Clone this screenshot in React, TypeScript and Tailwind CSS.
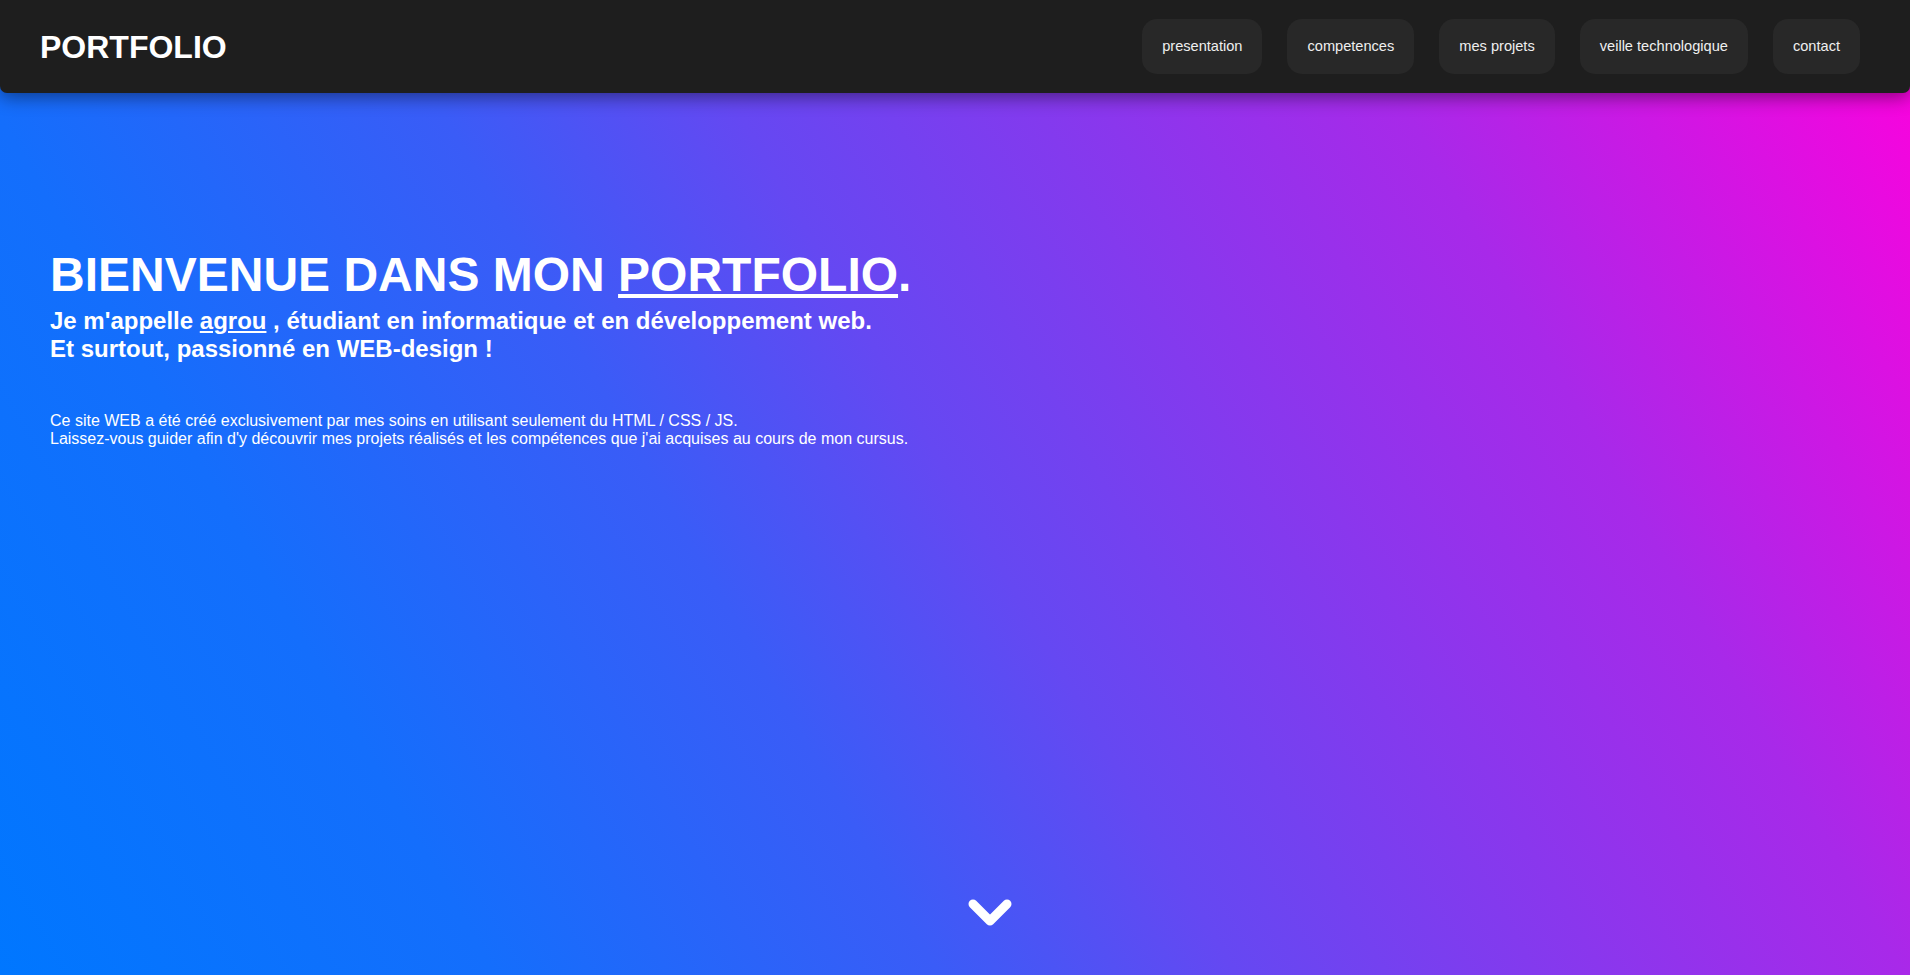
import React from "react";

const navItems = ["presentation", "competences", "mes projets", "veille technologique", "contact"];

export default function App() {
  return (
    <div
      className="h-[975px] w-full overflow-hidden flex flex-col text-white bg-[linear-gradient(60deg,#0077ff_0%,#146efc_20%,#3a5cf7_38%,#6548f2_50%,#a829e9_77%,#ff00dd_100%)]"
      style={{ fontFamily: '"Liberation Sans", Arial, sans-serif' }}
    >
      <header className="relative z-10 h-[93px] shrink-0 bg-[#1e1e1e] rounded-b-[7px] shadow-[0_4px_18px_rgba(0,0,0,0.45)] flex items-center justify-between pl-[40px] pr-[50px]">
        <div className="text-[32px] font-bold leading-none tracking-normal">PORTFOLIO</div>
        <nav className="flex items-center gap-[25px]">
          {navItems.map((item) => (
            <a
              key={item}
              className="h-[55px] px-[20px] flex items-center rounded-[15px] bg-[#282828] text-[#efefef] text-[14.6px] cursor-pointer"
            >
              {item}
            </a>
          ))}
        </nav>
      </header>

      <main className="flex-1 flex flex-col">
        <section className="pt-[154px] px-[50px]">
          <h1 className="text-[48px] font-bold leading-[1.15]">
            BIENVENUE DANS MON <span className="underline">PORTFOLIO</span>.
          </h1>
          <h2 className="mt-[5px] text-[24px] font-bold leading-[1.15]">
            Je m'appelle <span className="underline">agrou</span> , étudiant en informatique et en développement web.
            <br />
            Et surtout, passionné en WEB-design !
          </h2>
          <p className="mt-[50px] text-[16px] leading-[1.1]">
            Ce site WEB a été créé exclusivement par mes soins en utilisant seulement du HTML / CSS / JS.
            <br />
            Laissez-vous guider afin d'y découvrir mes projets réalisés et les compétences que j'ai acquises au cours de mon cursus.
          </p>
        </section>

        <div className="flex-1" />

        <div className="flex justify-center pl-[70px] pb-[48px]">
          <svg width="44" height="28" viewBox="0 0 44 28" fill="none" aria-hidden="true">
            <polyline
              points="5,5 22,22 39,5"
              stroke="#ffffff"
              strokeWidth="9"
              strokeLinecap="round"
              strokeLinejoin="round"
            />
          </svg>
        </div>
      </main>
    </div>
  );
}
